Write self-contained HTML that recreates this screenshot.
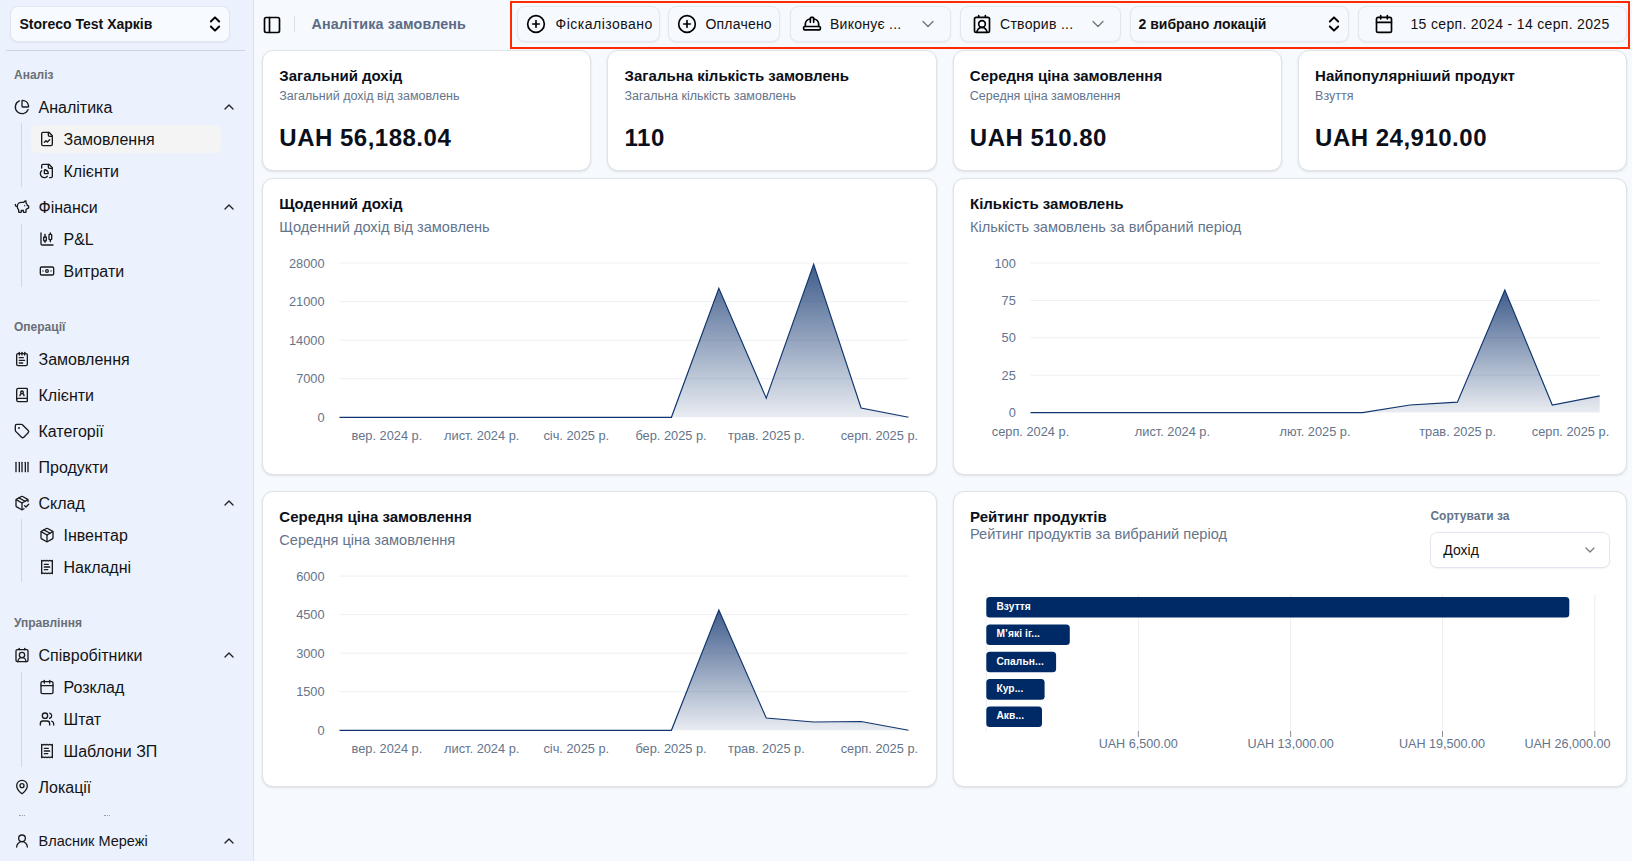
<!DOCTYPE html>
<html>
<head>
<meta charset="utf-8">
<style>
*{box-sizing:border-box;margin:0;padding:0}
html,body{width:1632px;height:861px;overflow:hidden}
body{font-family:"Liberation Sans",sans-serif;background:#f6f9fe;color:#0a0f1a;position:relative}
.abs{position:absolute}
.t{position:absolute;white-space:nowrap;line-height:1}
svg{position:absolute;overflow:visible}
.ic{fill:none;stroke:currentColor;stroke-width:2;stroke-linecap:round;stroke-linejoin:round}
#sb{position:absolute;left:0;top:0;width:254px;height:861px;background:#ebf2fe;border-right:1px solid #dde3ec}
.lbl{color:#6a6e75}
.it{color:#141414}
.vline{position:absolute;left:21px;width:1px;background:#d3d8df}
.btn{position:absolute;top:6px;height:36px;background:#f6f9fe;border:1px solid #e3e7ee;border-radius:8px;box-shadow:0 1px 2px rgba(0,0,0,.06)}
.card{position:absolute;background:#fff;border:1px solid #dfe2e7;border-radius:11px;box-shadow:0 1px 3px rgba(0,0,0,.07),0 1px 2px rgba(0,0,0,.04)}
.ctitle{font-weight:700;color:#0a0f1a}
.csub{color:#64748b}
.big{font-weight:700;color:#0a0f1a}
.ax{fill:#64748b;font-family:"Liberation Sans",sans-serif}
</style>
</head>
<body>
<div id="sb">
<div class="abs" style="left:10px;top:6px;width:220px;height:36px;background:#f7faff;border:1px solid #e1e6ee;border-radius:8px;box-shadow:0 1px 2px rgba(0,0,0,.05)"></div>
<div class="t " style="left:19.5px;top:17.2px;font-size:14px; font-weight:700;color:#111">Storeco Test Харків</div>
<svg class="ic" style="left:205px;top:13.8px;color:#000;stroke-width:2.3" width="20" height="20" viewBox="0 0 24 24"><path d="m7 15 5 5 5-5"/><path d="m7 9 5-5 5 5"/></svg>
<div class="abs" style="left:6px;top:50px;width:239px;height:1px;background:#cfd5de"></div>
<div class="t lbl" style="left:14px;top:69.09px;font-size:12px; font-weight:700">Аналіз</div>
<div class="t lbl" style="left:14px;top:321.09px;font-size:12px; font-weight:700">Операції</div>
<div class="t lbl" style="left:14px;top:617.09px;font-size:12px; font-weight:700">Управління</div>
<svg class="ic" style="left:14px;top:99px;color:#1a1a1a;stroke-width:2" width="16" height="16" viewBox="0 0 24 24"><path d="M21 12c.552 0 1.005-.449.95-.998a10 10 0 0 0-8.953-8.951c-.55-.055-.998.398-.998.95v8a1 1 0 0 0 1 1z"/><path d="M21.21 15.89A10 10 0 1 1 8 2.83"/></svg>
<div class="t it" style="left:38.5px;top:99.71px;font-size:16px">Аналітика</div>
<svg class="ic" style="left:221px;top:99px;color:#222;stroke-width:2" width="16" height="16" viewBox="0 0 24 24"><path d="m18 15-6-6-6 6"/></svg>
<svg class="ic" style="left:14px;top:199px;color:#1a1a1a;stroke-width:2" width="16" height="16" viewBox="0 0 24 24"><path d="M11 17h3v2a1 1 0 0 0 1 1h2a1 1 0 0 0 1-1v-3a3.16 3.16 0 0 0 2-2h1a1 1 0 0 0 1-1v-2a1 1 0 0 0-1-1h-1a5 5 0 0 0-2-4V3a4 4 0 0 0-3.2 1.6l-.3.4H11a6 6 0 0 0-6 6v1a5 5 0 0 0 2 4v3a1 1 0 0 0 1 1h2a1 1 0 0 0 1-1z"/><path d="M16 10h.01"/><path d="M2 8v1a2 2 0 0 0 2 2h1"/></svg>
<div class="t it" style="left:38.5px;top:199.71px;font-size:16px">Фінанси</div>
<svg class="ic" style="left:221px;top:199px;color:#222;stroke-width:2" width="16" height="16" viewBox="0 0 24 24"><path d="m18 15-6-6-6 6"/></svg>
<svg class="ic" style="left:14px;top:351px;color:#1a1a1a;stroke-width:2" width="16" height="16" viewBox="0 0 24 24"><path d="M8 2v4"/><path d="M12 2v4"/><path d="M16 2v4"/><rect width="16" height="18" x="4" y="4" rx="2"/><path d="M8 10h6"/><path d="M8 14h8"/><path d="M8 18h5"/></svg>
<div class="t it" style="left:38.5px;top:351.71px;font-size:16px">Замовлення</div>
<svg class="ic" style="left:14px;top:387px;color:#1a1a1a;stroke-width:2" width="16" height="16" viewBox="0 0 24 24"><path d="M15 13a3 3 0 1 0-6 0"/><path d="M4 19.5v-15A2.5 2.5 0 0 1 6.5 2H19a1 1 0 0 1 1 1v18a1 1 0 0 1-1 1H6.5a1 1 0 0 1 0-5H20"/><circle cx="12" cy="8" r="2"/></svg>
<div class="t it" style="left:38.5px;top:387.71px;font-size:16px">Клієнти</div>
<svg class="ic" style="left:14px;top:423px;color:#1a1a1a;stroke-width:2" width="16" height="16" viewBox="0 0 24 24"><path d="M12.586 2.586A2 2 0 0 0 11.172 2H4a2 2 0 0 0-2 2v7.172a2 2 0 0 0 .586 1.414l8.704 8.704a2.426 2.426 0 0 0 3.42 0l6.58-6.58a2.426 2.426 0 0 0 0-3.42z"/><circle cx="7.5" cy="7.5" r=".5" fill="currentColor"/></svg>
<div class="t it" style="left:38.5px;top:423.71px;font-size:16px">Категорії</div>
<svg class="ic" style="left:14px;top:459px;color:#1a1a1a;stroke-width:2" width="16" height="16" viewBox="0 0 24 24"><path d="M3 5v14"/><path d="M8 5v14"/><path d="M12 5v14"/><path d="M17 5v14"/><path d="M21 5v14"/></svg>
<div class="t it" style="left:38.5px;top:459.71px;font-size:16px">Продукти</div>
<svg class="ic" style="left:14px;top:495px;color:#1a1a1a;stroke-width:2" width="16" height="16" viewBox="0 0 24 24"><path d="m16 16 2 2 4-4"/><path d="M21 10V8a2 2 0 0 0-1-1.73l-7-4a2 2 0 0 0-2 0l-7 4A2 2 0 0 0 3 8v8a2 2 0 0 0 1 1.73l7 4a2 2 0 0 0 2 0l2-1.14"/><path d="m7.5 4.27 9 5.15"/><polyline points="3.29 7 12 12 20.71 7"/><line x1="12" x2="12" y1="22" y2="12"/></svg>
<div class="t it" style="left:38.5px;top:495.71px;font-size:16px">Склад</div>
<svg class="ic" style="left:221px;top:495px;color:#222;stroke-width:2" width="16" height="16" viewBox="0 0 24 24"><path d="m18 15-6-6-6 6"/></svg>
<svg class="ic" style="left:14px;top:647px;color:#1a1a1a;stroke-width:2" width="16" height="16" viewBox="0 0 24 24"><path d="M16 2v2"/><path d="M17.915 22a6 6 0 0 0-12 0"/><path d="M8 2v2"/><circle cx="12" cy="12" r="4"/><rect x="3" y="4" width="18" height="18" rx="2"/></svg>
<div class="t it" style="left:38.5px;top:647.71px;font-size:16px">Співробітники</div>
<svg class="ic" style="left:221px;top:647px;color:#222;stroke-width:2" width="16" height="16" viewBox="0 0 24 24"><path d="m18 15-6-6-6 6"/></svg>
<svg class="ic" style="left:14px;top:779px;color:#1a1a1a;stroke-width:2" width="16" height="16" viewBox="0 0 24 24"><path d="M20 10c0 4.993-5.539 10.193-7.399 11.799a1 1 0 0 1-1.202 0C9.539 20.193 4 14.993 4 10a8 8 0 0 1 16 0"/><circle cx="12" cy="10" r="3"/></svg>
<div class="t it" style="left:38.5px;top:779.71px;font-size:16px">Локації</div>
<div class="abs" style="left:31px;top:125px;width:190px;height:28px;background:#f4f4f5;border-radius:6px"></div>
<svg class="ic" style="left:39px;top:131px;color:#1a1a1a;stroke-width:2" width="16" height="16" viewBox="0 0 24 24"><path d="M15 2H6a2 2 0 0 0-2 2v16a2 2 0 0 0 2 2h12a2 2 0 0 0 2-2V7Z"/><path d="M14 2v4a2 2 0 0 0 2 2h4"/><path d="m16 13-3.5 3.5-2-2L8 17"/></svg>
<div class="t it" style="left:63.5px;top:131.71px;font-size:16px">Замовлення</div>
<svg class="ic" style="left:39px;top:163px;color:#1a1a1a;stroke-width:2" width="16" height="16" viewBox="0 0 24 24"><path d="M14 2v4a2 2 0 0 0 2 2h4"/><path d="M16 22h2a2 2 0 0 0 2-2V7l-5-5H6a2 2 0 0 0-2 2v3.5"/><path d="M4.017 11.512a6 6 0 1 0 8.466 8.475"/><path d="M9 16a1 1 0 0 1-1-1v-4c0-.552.45-1.008.995-.917a6 6 0 0 1 4.922 4.922c.091.544-.365.995-.917.995z"/></svg>
<div class="t it" style="left:63.5px;top:163.71px;font-size:16px">Клієнти</div>
<svg class="ic" style="left:39px;top:231px;color:#1a1a1a;stroke-width:2" width="16" height="16" viewBox="0 0 24 24"><path d="M9 5v4"/><rect width="4" height="6" x="7" y="9" rx="1"/><path d="M9 15v2"/><path d="M17 3v2"/><rect width="4" height="8" x="15" y="5" rx="1"/><path d="M17 13v3"/><path d="M3 3v16a2 2 0 0 0 2 2h16"/></svg>
<div class="t it" style="left:63.5px;top:231.71px;font-size:16px">P&amp;L</div>
<svg class="ic" style="left:39px;top:263px;color:#1a1a1a;stroke-width:2" width="16" height="16" viewBox="0 0 24 24"><rect width="20" height="12" x="2" y="6" rx="2"/><circle cx="12" cy="12" r="2"/><path d="M6 12h.01M18 12h.01"/></svg>
<div class="t it" style="left:63.5px;top:263.71px;font-size:16px">Витрати</div>
<svg class="ic" style="left:39px;top:527px;color:#1a1a1a;stroke-width:2" width="16" height="16" viewBox="0 0 24 24"><path d="M11 21.73a2 2 0 0 0 2 0l7-4A2 2 0 0 0 21 16V8a2 2 0 0 0-1-1.73l-7-4a2 2 0 0 0-2 0l-7 4A2 2 0 0 0 3 8v8a2 2 0 0 0 1 1.73z"/><path d="M12 22V12"/><polyline points="3.29 7 12 12 20.71 7"/><path d="m7.5 4.27 9 5.15"/></svg>
<div class="t it" style="left:63.5px;top:527.71px;font-size:16px">Інвентар</div>
<svg class="ic" style="left:39px;top:559px;color:#1a1a1a;stroke-width:2" width="16" height="16" viewBox="0 0 24 24"><path d="M4 2v20l2-1 2 1 2-1 2 1 2-1 2 1 2-1 2 1V2l-2 1-2-1-2 1-2-1-2 1-2-1-2 1Z"/><path d="M14 8H8"/><path d="M16 12H8"/><path d="M13 16H8"/></svg>
<div class="t it" style="left:63.5px;top:559.71px;font-size:16px">Накладні</div>
<svg class="ic" style="left:39px;top:679px;color:#1a1a1a;stroke-width:2" width="16" height="16" viewBox="0 0 24 24"><path d="M8 2v4"/><path d="M16 2v4"/><rect width="18" height="18" x="3" y="4" rx="2"/><path d="M3 10h18"/></svg>
<div class="t it" style="left:63.5px;top:679.71px;font-size:16px">Розклад</div>
<svg class="ic" style="left:39px;top:711px;color:#1a1a1a;stroke-width:2" width="16" height="16" viewBox="0 0 24 24"><path d="M16 21v-2a4 4 0 0 0-4-4H6a4 4 0 0 0-4 4v2"/><circle cx="9" cy="7" r="4"/><path d="M22 21v-2a4 4 0 0 0-3-3.87"/><path d="M16 3.13a4 4 0 0 1 0 7.75"/></svg>
<div class="t it" style="left:63.5px;top:711.71px;font-size:16px">Штат</div>
<svg class="ic" style="left:39px;top:743px;color:#1a1a1a;stroke-width:2" width="16" height="16" viewBox="0 0 24 24"><path d="M4 2v20l2-1 2 1 2-1 2 1 2-1 2 1 2-1 2 1V2l-2 1-2-1-2 1-2-1-2 1-2-1-2 1Z"/><path d="M14 8H8"/><path d="M16 12H8"/><path d="M13 16H8"/></svg>
<div class="t it" style="left:63.5px;top:743.71px;font-size:16px">Шаблони ЗП</div>
<div class="vline" style="top:123px;height:64px"></div>
<div class="vline" style="top:224px;height:63px"></div>
<div class="vline" style="top:519px;height:63px"></div>
<div class="vline" style="top:672px;height:95px"></div>
<div class="abs" style="left:19px;top:815px;width:6px;height:2px;border-top:1px dotted #9aa0a8"></div>
<div class="abs" style="left:104px;top:815px;width:6px;height:2px;border-top:1px dotted #9aa0a8"></div>
<svg class="ic" style="left:14px;top:833px;color:#1a1a1a;stroke-width:2" width="16" height="16" viewBox="0 0 24 24"><circle cx="12" cy="8" r="5"/><path d="M20 21a8 8 0 0 0-16 0"/></svg>
<div class="t it" style="left:38.5px;top:833.98px;font-size:14.5px">Власник Мережі</div>
<svg class="ic" style="left:221px;top:833px;color:#222;stroke-width:2" width="16" height="16" viewBox="0 0 24 24"><path d="m18 15-6-6-6 6"/></svg>
</div>
<svg class="ic" style="left:262px;top:15px;color:#000;stroke-width:2" width="20" height="20" viewBox="0 0 24 24"><rect width="18" height="18" x="3" y="3" rx="2"/><path d="M9 3v18"/></svg>
<div class="abs" style="left:294px;top:16px;width:1px;height:16px;background:#dde2ea"></div>
<div class="t " style="left:311.5px;top:17.1px;font-size:14.3px; font-weight:700;color:#5b6b85;letter-spacing:.15px">Аналітика замовлень</div>
<div class="btn" style="left:517px;width:143px"></div>
<div class="btn" style="left:668px;width:112px"></div>
<div class="btn" style="left:789.5px;width:161px"></div>
<div class="btn" style="left:959.5px;width:161px"></div>
<div class="btn" style="left:1129.5px;width:219px"></div>
<div class="btn" style="left:1357.5px;width:269px"></div>
<svg class="ic" style="left:526px;top:14px;color:#000;stroke-width:2" width="20" height="20" viewBox="0 0 24 24"><circle cx="12" cy="12" r="10"/><path d="M8 12h8"/><path d="M12 8v8"/></svg>
<div class="t " style="left:555.5px;top:17.3px;font-size:14px; color:#111;letter-spacing:.5px">Фіскалізовано</div>
<svg class="ic" style="left:677px;top:14px;color:#000;stroke-width:2" width="20" height="20" viewBox="0 0 24 24"><circle cx="12" cy="12" r="10"/><path d="M8 12h8"/><path d="M12 8v8"/></svg>
<div class="t " style="left:705.5px;top:17.3px;font-size:14px; color:#111;letter-spacing:.2px">Оплачено</div>
<svg class="ic" style="left:802px;top:14px;color:#000;stroke-width:2" width="20" height="20" viewBox="0 0 24 24"><path d="M10 10V5a1 1 0 0 1 1-1h2a1 1 0 0 1 1 1v5"/><path d="M14 6a6 6 0 0 1 6 6v3"/><path d="M4 15v-3a6 6 0 0 1 6-6"/><rect x="2" y="15" width="20" height="4" rx="1"/></svg>
<div class="t " style="left:830px;top:17.3px;font-size:14px; color:#111;letter-spacing:.25px">Виконує ...</div>
<svg class="ic" style="left:918px;top:14px;color:#777;stroke-width:1.6" width="20" height="20" viewBox="0 0 24 24"><path d="m6 9 6 6 6-6"/></svg>
<svg class="ic" style="left:972px;top:14px;color:#000;stroke-width:2" width="20" height="20" viewBox="0 0 24 24"><path d="M16 2v2"/><path d="M17.915 22a6 6 0 0 0-12 0"/><path d="M8 2v2"/><circle cx="12" cy="12" r="4"/><rect x="3" y="4" width="18" height="18" rx="2"/></svg>
<div class="t " style="left:1000px;top:17.3px;font-size:14px; color:#111;letter-spacing:.3px">Створив ...</div>
<svg class="ic" style="left:1088px;top:14px;color:#777;stroke-width:1.6" width="20" height="20" viewBox="0 0 24 24"><path d="m6 9 6 6 6-6"/></svg>
<div class="t " style="left:1138.5px;top:17.3px;font-size:14px; font-weight:700;color:#111">2 вибрано локацій</div>
<svg class="ic" style="left:1324.3px;top:14px;color:#000;stroke-width:2.3" width="20" height="20" viewBox="0 0 24 24"><path d="m7 15 5 5 5-5"/><path d="m7 9 5-5 5 5"/></svg>
<svg class="ic" style="left:1374px;top:14.4px;color:#000;stroke-width:2" width="20" height="20" viewBox="0 0 24 24"><path d="M8 2v4"/><path d="M16 2v4"/><rect width="18" height="18" x="3" y="4" rx="2"/><path d="M3 10h18"/></svg>
<div class="t " style="left:1410.5px;top:17.3px;font-size:14px; color:#111;letter-spacing:.33px">15 серп. 2024 - 14 серп. 2025</div>
<div class="abs" style="left:510px;top:1px;width:1120px;height:48px;border:2px solid #ff2a00"></div>
<div class="card" style="left:262px;top:50px;width:329.25px;height:120.5px"></div>
<div class="card" style="left:607.25px;top:50px;width:329.25px;height:120.5px"></div>
<div class="card" style="left:952.5px;top:50px;width:329.25px;height:120.5px"></div>
<div class="card" style="left:1297.75px;top:50px;width:329.25px;height:120.5px"></div>
<div class="card" style="left:262px;top:178px;width:674.5px;height:297px"></div>
<div class="card" style="left:262px;top:491px;width:674.5px;height:296px"></div>
<div class="card" style="left:952.5px;top:178px;width:674.5px;height:297px"></div>
<div class="card" style="left:952.5px;top:491px;width:674.5px;height:296px"></div>
<div class="t ctitle" style="left:279.3px;top:68.4px;font-size:15px">Загальний дохід</div>
<div class="t csub" style="left:279.3px;top:90.1px;font-size:12.5px">Загальний дохід від замовлень</div>
<div class="t big" style="left:279.3px;top:125.9px;font-size:24px; letter-spacing:.5px">UAH 56,188.04</div>
<div class="t ctitle" style="left:624.55px;top:68.4px;font-size:15px">Загальна кількість замовлень</div>
<div class="t csub" style="left:624.55px;top:90.1px;font-size:12.5px">Загальна кількість замовлень</div>
<div class="t big" style="left:624.55px;top:125.9px;font-size:24px; letter-spacing:.5px">110</div>
<div class="t ctitle" style="left:969.8px;top:68.4px;font-size:15px">Середня ціна замовлення</div>
<div class="t csub" style="left:969.8px;top:90.1px;font-size:12.5px">Середня ціна замовлення</div>
<div class="t big" style="left:969.8px;top:125.9px;font-size:24px; letter-spacing:.5px">UAH 510.80</div>
<div class="t ctitle" style="left:1315.05px;top:68.4px;font-size:15px">Найпопулярніший продукт</div>
<div class="t csub" style="left:1315.05px;top:90.1px;font-size:12.5px">Взуття</div>
<div class="t big" style="left:1315.05px;top:125.9px;font-size:24px; letter-spacing:.5px">UAH 24,910.00</div>
<div class="t ctitle" style="left:279.3px;top:195.7px;font-size:15px">Щоденний дохід</div>
<div class="t csub" style="left:279.3px;top:220.2px;font-size:14.6px">Щоденний дохід від замовлень</div>
<div class="t ctitle" style="left:970px;top:195.7px;font-size:15px">Кількість замовлень</div>
<div class="t csub" style="left:970px;top:220.2px;font-size:14.6px">Кількість замовлень за вибраний період</div>
<div class="t ctitle" style="left:279.3px;top:508.8px;font-size:15px">Середня ціна замовлення</div>
<div class="t csub" style="left:279.3px;top:533.4px;font-size:14.6px">Середня ціна замовлення</div>
<div class="t ctitle" style="left:970px;top:509.1px;font-size:15px">Рейтинг продуктів</div>
<div class="t csub" style="left:970px;top:527.3px;font-size:14.6px">Рейтинг продуктів за вибраний період</div>
<div class="t " style="left:1430.4px;top:510.0px;font-size:12px; font-weight:700;color:#64748b">Сортувати за</div>
<div class="abs" style="left:1430px;top:532px;width:180px;height:36px;background:#fff;border:1px solid #e2e6ee;border-radius:7px;box-shadow:0 1px 2px rgba(0,0,0,.05)"></div>
<div class="t " style="left:1443.3px;top:543.0px;font-size:14px; color:#111">Дохід</div>
<svg class="ic" style="left:1582px;top:542px;color:#777;stroke-width:1.8" width="16" height="16" viewBox="0 0 24 24"><path d="m6 9 6 6 6-6"/></svg>
<svg style="left:0;top:0" width="1632" height="861" viewBox="0 0 1632 861">
<defs><linearGradient id="g" x1="0" y1="0" x2="0" y2="1"><stop offset="0" stop-color="#0a2f6b" stop-opacity="0.78"/><stop offset="1" stop-color="#0a2f6b" stop-opacity="0.09"/></linearGradient></defs>
<line x1="339.5" x2="908.5" y1="263" y2="263" stroke="#eef0f3" stroke-width="1"/>
<line x1="339.5" x2="908.5" y1="301.6" y2="301.6" stroke="#eef0f3" stroke-width="1"/>
<line x1="339.5" x2="908.5" y1="340.2" y2="340.2" stroke="#eef0f3" stroke-width="1"/>
<line x1="339.5" x2="908.5" y1="378.7" y2="378.7" stroke="#eef0f3" stroke-width="1"/>
<text class="ax" x="324.6" y="267.6" text-anchor="end" font-size="12.8">28000</text>
<text class="ax" x="324.6" y="306.2" text-anchor="end" font-size="12.8">21000</text>
<text class="ax" x="324.6" y="344.8" text-anchor="end" font-size="12.8">14000</text>
<text class="ax" x="324.6" y="383.3" text-anchor="end" font-size="12.8">7000</text>
<text class="ax" x="324.6" y="421.9" text-anchor="end" font-size="12.8">0</text>
<path d="M339.50,417.30 L386.92,417.30 L434.33,417.30 L481.75,417.30 L529.17,417.30 L576.58,417.30 L624.00,417.30 L671.42,417.30 L718.83,288.30 L766.25,398.20 L813.67,264.40 L861.08,408.00 L908.50,417.30 L908.5,417.3 L339.5,417.3 Z" fill="url(#g)"/>
<path d="M339.50,417.30 L386.92,417.30 L434.33,417.30 L481.75,417.30 L529.17,417.30 L576.58,417.30 L624.00,417.30 L671.42,417.30 L718.83,288.30 L766.25,398.20 L813.67,264.40 L861.08,408.00 L908.50,417.30" fill="none" stroke="#10346e" stroke-width="1.15" stroke-linejoin="miter"/>
<text class="ax" x="386.9" y="440" text-anchor="middle" font-size="12.8">вер. 2024 р.</text>
<text class="ax" x="481.7" y="440" text-anchor="middle" font-size="12.8">лист. 2024 р.</text>
<text class="ax" x="576.3" y="440" text-anchor="middle" font-size="12.8">січ. 2025 р.</text>
<text class="ax" x="671" y="440" text-anchor="middle" font-size="12.8">бер. 2025 р.</text>
<text class="ax" x="766.4" y="440" text-anchor="middle" font-size="12.8">трав. 2025 р.</text>
<text class="ax" x="879.4" y="440" text-anchor="middle" font-size="12.8">серп. 2025 р.</text>
<line x1="1030.5" x2="1599.7" y1="263" y2="263" stroke="#eef0f3" stroke-width="1"/>
<line x1="1030.5" x2="1599.7" y1="300.4" y2="300.4" stroke="#eef0f3" stroke-width="1"/>
<line x1="1030.5" x2="1599.7" y1="337.8" y2="337.8" stroke="#eef0f3" stroke-width="1"/>
<line x1="1030.5" x2="1599.7" y1="375.2" y2="375.2" stroke="#eef0f3" stroke-width="1"/>
<text class="ax" x="1015.8" y="267.6" text-anchor="end" font-size="12.8">100</text>
<text class="ax" x="1015.8" y="305.0" text-anchor="end" font-size="12.8">75</text>
<text class="ax" x="1015.8" y="342.4" text-anchor="end" font-size="12.8">50</text>
<text class="ax" x="1015.8" y="379.8" text-anchor="end" font-size="12.8">25</text>
<text class="ax" x="1015.8" y="417.2" text-anchor="end" font-size="12.8">0</text>
<path d="M1030.50,412.60 L1077.93,412.60 L1125.37,412.60 L1172.80,412.60 L1220.23,412.60 L1267.67,412.60 L1315.10,412.60 L1362.53,412.60 L1409.97,405.00 L1457.40,402.10 L1504.83,290.00 L1552.27,405.00 L1599.70,395.90 L1599.7,412.6 L1030.5,412.6 Z" fill="url(#g)"/>
<path d="M1030.50,412.60 L1077.93,412.60 L1125.37,412.60 L1172.80,412.60 L1220.23,412.60 L1267.67,412.60 L1315.10,412.60 L1362.53,412.60 L1409.97,405.00 L1457.40,402.10 L1504.83,290.00 L1552.27,405.00 L1599.70,395.90" fill="none" stroke="#10346e" stroke-width="1.15" stroke-linejoin="miter"/>
<text class="ax" x="1030.5" y="435.5" text-anchor="middle" font-size="12.8">серп. 2024 р.</text>
<text class="ax" x="1172.4" y="435.5" text-anchor="middle" font-size="12.8">лист. 2024 р.</text>
<text class="ax" x="1315" y="435.5" text-anchor="middle" font-size="12.8">лют. 2025 р.</text>
<text class="ax" x="1457.6" y="435.5" text-anchor="middle" font-size="12.8">трав. 2025 р.</text>
<text class="ax" x="1570.5" y="435.5" text-anchor="middle" font-size="12.8">серп. 2025 р.</text>
<line x1="339.5" x2="908.5" y1="576" y2="576" stroke="#eef0f3" stroke-width="1"/>
<line x1="339.5" x2="908.5" y1="614.6" y2="614.6" stroke="#eef0f3" stroke-width="1"/>
<line x1="339.5" x2="908.5" y1="653.2" y2="653.2" stroke="#eef0f3" stroke-width="1"/>
<line x1="339.5" x2="908.5" y1="691.7" y2="691.7" stroke="#eef0f3" stroke-width="1"/>
<text class="ax" x="324.6" y="580.6" text-anchor="end" font-size="12.8">6000</text>
<text class="ax" x="324.6" y="619.2" text-anchor="end" font-size="12.8">4500</text>
<text class="ax" x="324.6" y="657.8" text-anchor="end" font-size="12.8">3000</text>
<text class="ax" x="324.6" y="696.3" text-anchor="end" font-size="12.8">1500</text>
<text class="ax" x="324.6" y="734.9" text-anchor="end" font-size="12.8">0</text>
<path d="M339.50,730.30 L386.92,730.30 L434.33,730.30 L481.75,730.30 L529.17,730.30 L576.58,730.30 L624.00,730.30 L671.42,730.30 L718.83,610.00 L766.25,718.00 L813.67,722.00 L861.08,721.50 L908.50,730.30 L908.5,730.3 L339.5,730.3 Z" fill="url(#g)"/>
<path d="M339.50,730.30 L386.92,730.30 L434.33,730.30 L481.75,730.30 L529.17,730.30 L576.58,730.30 L624.00,730.30 L671.42,730.30 L718.83,610.00 L766.25,718.00 L813.67,722.00 L861.08,721.50 L908.50,730.30" fill="none" stroke="#10346e" stroke-width="1.15" stroke-linejoin="miter"/>
<text class="ax" x="386.9" y="752.8" text-anchor="middle" font-size="12.8">вер. 2024 р.</text>
<text class="ax" x="481.7" y="752.8" text-anchor="middle" font-size="12.8">лист. 2024 р.</text>
<text class="ax" x="576.3" y="752.8" text-anchor="middle" font-size="12.8">січ. 2025 р.</text>
<text class="ax" x="671" y="752.8" text-anchor="middle" font-size="12.8">бер. 2025 р.</text>
<text class="ax" x="766.4" y="752.8" text-anchor="middle" font-size="12.8">трав. 2025 р.</text>
<text class="ax" x="879.4" y="752.8" text-anchor="middle" font-size="12.8">серп. 2025 р.</text>
<line x1="986.3" x2="986.3" y1="594" y2="731" stroke="#eceef1" stroke-width="1"/>
<line x1="1138.4" x2="1138.4" y1="594" y2="731" stroke="#eceef1" stroke-width="1"/>
<line x1="1290.6" x2="1290.6" y1="594" y2="731" stroke="#eceef1" stroke-width="1"/>
<line x1="1442.5" x2="1442.5" y1="594" y2="731" stroke="#eceef1" stroke-width="1"/>
<line x1="1594.8" x2="1594.8" y1="594" y2="731" stroke="#eceef1" stroke-width="1"/>
<line x1="1138.4" x2="1138.4" y1="731" y2="737" stroke="#8a8f98" stroke-width="1"/>
<line x1="1290.6" x2="1290.6" y1="731" y2="737" stroke="#8a8f98" stroke-width="1"/>
<line x1="1442.5" x2="1442.5" y1="731" y2="737" stroke="#8a8f98" stroke-width="1"/>
<line x1="1594.8" x2="1594.8" y1="731" y2="737" stroke="#8a8f98" stroke-width="1"/>
<rect x="986.3" y="596.9" width="583.0" height="20.6" rx="3.5" fill="#002a66"/>
<text x="996.4" y="609.8" font-size="10.2" font-weight="700" letter-spacing=".1" fill="#fff" font-family="Liberation Sans">Взуття</text>
<rect x="986.3" y="624.4" width="83.5" height="20.6" rx="3.5" fill="#002a66"/>
<text x="996.4" y="637.3" font-size="10.2" font-weight="700" letter-spacing=".1" fill="#fff" font-family="Liberation Sans">М’які іг...</text>
<rect x="986.3" y="651.7" width="69.8" height="20.6" rx="3.5" fill="#002a66"/>
<text x="996.4" y="664.6" font-size="10.2" font-weight="700" letter-spacing=".1" fill="#fff" font-family="Liberation Sans">Спальн...</text>
<rect x="986.3" y="679.1" width="58.3" height="20.6" rx="3.5" fill="#002a66"/>
<text x="996.4" y="692.0" font-size="10.2" font-weight="700" letter-spacing=".1" fill="#fff" font-family="Liberation Sans">Кур...</text>
<rect x="986.3" y="706.4" width="55.7" height="20.6" rx="3.5" fill="#002a66"/>
<text x="996.4" y="719.3" font-size="10.2" font-weight="700" letter-spacing=".1" fill="#fff" font-family="Liberation Sans">Акв...</text>
<text class="ax" x="1138.2" y="747.7" text-anchor="middle" font-size="12.6">UAH 6,500.00</text>
<text class="ax" x="1290.6" y="747.7" text-anchor="middle" font-size="12.6">UAH 13,000.00</text>
<text class="ax" x="1442" y="747.7" text-anchor="middle" font-size="12.6">UAH 19,500.00</text>
<text class="ax" x="1610.5" y="747.7" text-anchor="end" font-size="12.6">UAH 26,000.00</text>
</svg>
</body>
</html>
